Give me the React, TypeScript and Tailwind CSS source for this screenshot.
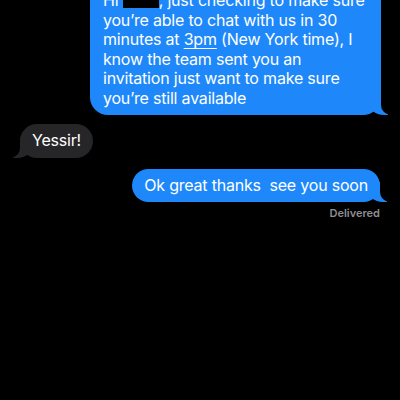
import React from "react";

function TailRight({ color }: { color: string }) {
  return (
    <>
      <span className={`absolute bottom-0 right-[-7px] h-[20px] w-[20px] rounded-bl-[16px_14px] ${color}`} />
      <span className="absolute bottom-0 right-[-10px] h-[20px] w-[10px] rounded-bl-[10px] bg-black" />
    </>
  );
}

function TailLeft({ color }: { color: string }) {
  return (
    <>
      <span className={`absolute bottom-0 left-[-7px] h-[20px] w-[20px] rounded-br-[16px_14px] ${color}`} />
      <span className="absolute bottom-0 left-[-10px] h-[20px] w-[10px] rounded-br-[10px] bg-black" />
    </>
  );
}

export default function App() {
  return (
    <div className="w-[400px] h-[400px] bg-black overflow-hidden font-['Inter','Noto_Sans',sans-serif] text-white">
      <div className="flex flex-col mt-[-16px]">
        <div className="self-end mr-[19px] w-[291px] relative">
          <TailRight color="bg-[#1e88fa]" />
          <div className="relative rounded-[18px] bg-[#1e88fa] px-[13px] py-[7px] text-[16px] leading-[19.5px] tracking-[-0.2px]">
            <div className="whitespace-nowrap">
              Hi <span className="inline-block w-[36px] h-[17px] bg-black align-[-2px]" />, just checking to make sure
            </div>
            <div className="whitespace-nowrap">you’re able to chat with us in 30</div>
            <div className="whitespace-nowrap">
              minutes at <span className="underline decoration-1 underline-offset-[3px]">3pm</span> (New York time), I
            </div>
            <div className="whitespace-nowrap">know the team sent you an</div>
            <div className="whitespace-nowrap">invitation just want to make sure</div>
            <div className="whitespace-nowrap">you’re still available</div>
          </div>
        </div>

        <div className="self-start ml-[20px] mt-[9px] relative">
          <TailLeft color="bg-[#262628]" />
          <div className="relative rounded-[17px] bg-[#262628] px-[12px] py-[7px] text-[16px] leading-[19.5px] tracking-[-0.2px]">
            Yessir!
          </div>
        </div>

        <div className="self-end mr-[20px] mt-[11px] relative">
          <TailRight color="bg-[#1e88fa]" />
          <div className="relative rounded-[17px] bg-[#1e88fa] px-[12px] py-[7px] text-[16px] leading-[19.5px] tracking-[-0.2px] whitespace-pre">
            {"Ok great thanks  see you soon"}
          </div>
        </div>

        <div className="self-end mr-[20px] mt-[5px] text-[11px] leading-[13px] font-semibold text-[#8e8e93]">
          Delivered
        </div>
      </div>
    </div>
  );
}
